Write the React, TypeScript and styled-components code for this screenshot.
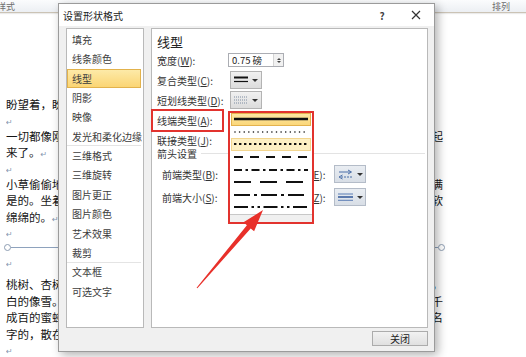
import React from "react";
import styled, { createGlobalStyle } from "styled-components";

const GlobalStyle = createGlobalStyle`
  html, body {
    margin: 0;
    padding: 0;
    background: #fff;
  }
  body {
    font-family: "Noto Sans CJK SC", "Noto Sans", sans-serif;
  }
`;

const Screen = styled.div`
  position: relative;
  width: 526px;
  height: 357px;
  overflow: hidden;
  background: #fff;
`;

/* ---------- word ribbon + document behind the dialog ---------- */

const Ribbon = styled.div`
  height: 12px;
  display: flex;
  align-items: center;
  justify-content: space-between;
  padding: 0 16px 0 0;
  background: linear-gradient(#fbfcfd, #eceff3);
  border-bottom: 1px solid #cbc3b5;
  box-shadow: 0 1px 1px rgba(0, 0, 0, 0.08);
  font-size: 9px;
  color: #6d6d6d;
`;

const RibbonLabel = styled.span<{ $shift?: number }>`
  margin-left: ${(p) => p.$shift ?? 0}px;
`;

const Document = styled.div`
  width: 437px;
  padding: 83px 0 0 6px;
  font-size: 11.5px;
  line-height: 16.5px;
  color: #151515;
`;

const Para = styled.p<{ $gap?: number }>`
  margin: ${(p) => p.$gap ?? 0}px 0 0;
  height: auto;
`;

const EmptyPara = styled.p`
  margin: 0;
  height: 15px;
  line-height: 15px;
  overflow: hidden;
`;

const Mark = styled.span`
  font-family: "DejaVu Sans", sans-serif;
  font-size: 8px;
  line-height: 0;
  color: #8596b0;
`;

const ShapeLine = styled.div`
  display: flex;
  align-items: center;
  width: 441px;
  height: 15px;
  margin-left: -2px;
`;

const Handle = styled.span`
  flex: none;
  width: 5px;
  height: 5px;
  border-radius: 50%;
  border: 1px solid #8d9db2;
  background: #fff;
`;

const Stroke = styled.span`
  flex: 1;
  height: 1px;
  background: #8ea2bd;
`;

/* ---------- dialog ---------- */

const Dialog = styled.div`
  position: absolute;
  left: 58px;
  top: 3px;
  width: 377px;
  height: 349px;
  box-sizing: border-box;
  display: flex;
  flex-direction: column;
  background: #f0f0f0;
  border: 1px solid #9b9b9b;
  box-shadow: 3px 3px 9px rgba(0, 0, 0, 0.3);
  font-size: 10px;
  color: #333;
`;

const TitleBar = styled.div`
  flex: none;
  height: 22px;
  display: flex;
  align-items: center;
  padding: 0 3px 0 4px;
  background: #fff;
`;

const Title = styled.div`
  flex: 1;
  font-size: 10px;
  color: #222;
`;

const TitleButton = styled.div<{ $w: number }>`
  width: ${(p) => p.$w}px;
  height: 18px;
  display: flex;
  align-items: center;
  justify-content: center;
  font-size: 10px;
  font-weight: bold;
  color: #444;
`;

const Body = styled.div`
  flex: 1;
  display: flex;
  gap: 7px;
  padding: 2px 6px 0 7px;
  min-height: 0;
`;

const Nav = styled.ul`
  width: 78px;
  box-sizing: border-box;
  margin: 0;
  padding: 1px 2px 0 0;
  list-style: none;
  background: #fff;
  border: 1px solid #b9b9b9;
`;

const NavItem = styled.li<{ $active?: boolean; $divider?: boolean }>`
  height: 19.4px;
  box-sizing: border-box;
  display: flex;
  align-items: center;
  padding-left: ${(p) => (p.$active ? 4 : 5)}px;
  font-size: 10px;
  color: #3d3d3d;
  white-space: nowrap;
  border-bottom: 1px solid ${(p) => (p.$divider ? "#e4e4e4" : "transparent")};
  ${(p) =>
    p.$active &&
    `
    background: linear-gradient(#fdeaa8, #fbd574);
    border: 1px solid #e2b24c;
  `}
`;

const Pane = styled.div`
  flex: 1;
  box-sizing: border-box;
  padding: 5px 2px 0 5px;
  background: #fff;
  border: 1px solid #b9b9b9;
`;

const PaneHeading = styled.div`
  height: 16px;
  font-size: 13px;
  line-height: 16px;
  color: #222;
`;

const FieldRow = styled.div<{ $h?: number }>`
  display: flex;
  align-items: center;
  height: ${(p) => p.$h ?? 20}px;
`;

const FieldLabel = styled.span<{ $w: number }>`
  flex: none;
  width: ${(p) => p.$w}px;
  white-space: nowrap;
  color: #333;
`;

const SectionHeader = styled.div`
  display: flex;
  align-items: center;
  gap: 4px;
  height: 14px;
  margin-top: -4px;
  &::after {
    content: "";
    flex: 1;
    height: 1px;
    background: #e3e3e3;
  }
`;

const ArrowBlock = styled.div`
  margin-top: 2.5px;
  padding-left: 5px;
`;

const Spacer = styled.span<{ $w: number }>`
  flex: none;
  width: ${(p) => p.$w}px;
`;

const SpinInput = styled.div`
  width: 56px;
  height: 14px;
  box-sizing: border-box;
  display: flex;
  align-items: center;
  margin-left: -2px;
  padding-left: 3px;
  background: #fff;
  border: 1px solid #abadb3;
  font-size: 9.5px;
  color: #222;
`;

const SpinText = styled.span`
  flex: 1;
  white-space: nowrap;
`;

const Spinner = styled.div`
  width: 9px;
  height: 100%;
  display: flex;
  flex-direction: column;
  align-items: center;
  justify-content: center;
  gap: 1px;
  border-left: 1px solid #d4d4d4;
  background: #f1f1f1;
`;

const Tri = styled.span<{ $up?: boolean }>`
  width: 0;
  height: 0;
  border-left: 2.5px solid transparent;
  border-right: 2.5px solid transparent;
  ${(p) =>
    p.$up ? "border-bottom: 2.5px solid #444;" : "border-top: 2.5px solid #444;"}
`;

const Dropdown = styled.div<{ $blue?: boolean }>`
  flex: none;
  width: 32px;
  height: 18px;
  box-sizing: border-box;
  display: flex;
  align-items: center;
  justify-content: center;
  gap: 4px;
  border: 1px solid ${(p) => (p.$blue ? "#b4bcc8" : "#b3b3b3")};
  background: ${(p) =>
    p.$blue
      ? "linear-gradient(#e9edf2, #d8dee6)"
      : "linear-gradient(#f1f1f1, #dcdcdc)"};
`;

const Caret = styled.span`
  width: 0;
  height: 0;
  border-left: 3px solid transparent;
  border-right: 3px solid transparent;
  border-top: 3px solid #333;
`;

const Footer = styled.div`
  flex: none;
  height: 23px;
  box-sizing: border-box;
  display: flex;
  justify-content: flex-end;
  align-items: flex-start;
  padding: 3px 6px 0 0;
`;

const CloseButton = styled.button`
  width: 56px;
  height: 15px;
  padding: 0;
  border: 1px solid #acacac;
  background: linear-gradient(#f2f2f2, #e0e0e0);
  font-family: inherit;
  font-size: 10px;
  line-height: 13px;
  color: #222;
`;

/* ---------- annotations + open dash list ---------- */

const RedBox = styled.div<{ $l: number; $t: number; $w: number; $h: number }>`
  position: absolute;
  left: ${(p) => p.$l}px;
  top: ${(p) => p.$t}px;
  width: ${(p) => p.$w}px;
  height: ${(p) => p.$h}px;
  box-sizing: border-box;
  border: 2px solid #e2332e;
`;

const DashMenu = styled(RedBox)`
  display: flex;
  flex-direction: column;
  background: #f0f0f0;
`;

const DashList = styled.div`
  background: #fff;
  border-bottom: 1px solid #c8c8c8;
`;

const DashRow = styled.div<{ $tone?: "selected" | "hover" }>`
  height: 12.6px;
  box-sizing: border-box;
  display: flex;
  align-items: center;
  justify-content: center;
  margin: 0 1px;
  border: 1px solid transparent;
  ${(p) =>
    p.$tone === "selected" &&
    "background: linear-gradient(#fde7a2, #fbd77a); border-color: #e3b24e;"}
  ${(p) =>
    p.$tone === "hover" && "background: #fdf0c4; border-color: #f3d68f;"}
`;

const Overlay = styled.svg`
  position: absolute;
  left: 0;
  top: 0;
  pointer-events: none;
`;

/* ---------- small drawings ---------- */

const CloseIcon = () => (
  <svg width="10" height="10" viewBox="0 0 10 10">
    <path d="M1 1 L9 9 M9 1 L1 9" stroke="#333" strokeWidth="1.2" />
  </svg>
);

const CompoundIcon = () => (
  <svg width="14" height="10" viewBox="0 0 14 10">
    <line x1="0" y1="2.5" x2="14" y2="2.5" stroke="#111" strokeWidth="2" />
    <line x1="0" y1="6.5" x2="14" y2="6.5" stroke="#111" strokeWidth="1.2" />
  </svg>
);

const DashTypeIcon = () => (
  <svg width="14" height="10" viewBox="0 0 14 10">
    {[2, 5, 8].map((y) => (
      <line
        key={y}
        x1="0"
        y1={y}
        x2="14"
        y2={y}
        stroke="#7d8ba0"
        strokeWidth="1"
        strokeDasharray="1 1"
      />
    ))}
  </svg>
);

const ArrowTypeIcon = () => (
  <svg width="15" height="11" viewBox="0 0 15 11">
    <line x1="1" y1="3" x2="12" y2="3" stroke="#4a6ea8" strokeWidth="1" />
    <path d="M10 1 L13.5 3 L10 5" fill="none" stroke="#4a6ea8" strokeWidth="1" />
    <line x1="3" y1="8" x2="14" y2="8" stroke="#4a6ea8" strokeWidth="1" strokeDasharray="2 1" />
    <path d="M4.5 6 L1 8 L4.5 10" fill="none" stroke="#4a6ea8" strokeWidth="1" />
  </svg>
);

const ArrowSizeIcon = () => (
  <svg width="15" height="10" viewBox="0 0 15 10">
    <line x1="0" y1="2" x2="15" y2="2" stroke="#5a7cb4" strokeWidth="1" />
    <line x1="0" y1="5" x2="15" y2="5" stroke="#3b5f9e" strokeWidth="1.6" />
    <line x1="0" y1="8.3" x2="15" y2="8.3" stroke="#5a7cb4" strokeWidth="1" />
  </svg>
);

interface DashSampleProps {
  dash?: string;
  width?: number;
  round?: boolean;
}

const DashSample: React.FC<DashSampleProps> = ({ dash, width = 2, round }) => (
  <svg width="74" height="8" viewBox="0 0 74 8">
    <line
      x1={round ? 1 : 0}
      y1="4"
      x2="74"
      y2="4"
      stroke="#111"
      strokeWidth={width}
      strokeDasharray={dash}
      strokeLinecap={round ? "round" : "butt"}
    />
  </svg>
);

const navItems: { label: string; active?: boolean; divider?: boolean }[] = [
  { label: "填充" },
  { label: "线条颜色" },
  { label: "线型", active: true },
  { label: "阴影" },
  { label: "映像" },
  { label: "发光和柔化边缘", divider: true },
  { label: "三维格式" },
  { label: "三维旋转" },
  { label: "图片更正" },
  { label: "图片颜色" },
  { label: "艺术效果" },
  { label: "裁剪", divider: true },
  { label: "文本框" },
  { label: "可选文字" },
];

const dashStyles: (DashSampleProps & { tone?: "selected" | "hover" })[] = [
  { tone: "selected", width: 2.4 },
  { dash: "0.01 4.6", width: 1.6, round: true },
  { tone: "hover", dash: "2.4 2.6", width: 2.2 },
  { dash: "9 7" },
  { dash: "8 3.5 2.5 3.5" },
  { dash: "17 9" },
  { dash: "16 4 3 4" },
  { dash: "14 3.5 2.5 3.5 2.5 3.5" },
];

const Paragraph: React.FC<{ text: string; gap?: number }> = ({ text, gap }) => (
  <Para $gap={gap}>
    {text}
    <Mark>↵</Mark>
  </Para>
);

const Blank = () => (
  <EmptyPara>
    <Mark>↵</Mark>
  </EmptyPara>
);

export default function App() {
  return (
    <Screen>
      <GlobalStyle />
      <Ribbon>
        <RibbonLabel $shift={-3}>样式</RibbonLabel>
        <RibbonLabel>排列</RibbonLabel>
      </Ribbon>

      <Document>
        <Paragraph text="盼望着，盼望着，东风来了，春天的脚步近了。" />
        <Blank />
        <Paragraph text="一切都像刚睡醒的样子，欣欣然张开了眼。山朗润起来了，水涨起来了，太阳的脸红起来了。" />
        <Blank />
        <Paragraph text="小草偷偷地从土里钻出来，嫩嫩的，绿绿的。园子里，田野里，瞧去，一大片一大片满是的。坐着，躺着，打两个滚，踢几脚球，赛几趟跑，捉几回迷藏。风轻悄悄的，草软绵绵的。" />
        <Blank />
        <ShapeLine>
          <Handle />
          <Stroke />
          <Handle />
        </ShapeLine>
        <Blank />
        <Paragraph
          gap={6}
          text="桃树、杏树、梨树，你不让我，我不让你，都开满了花赶趟儿。红的像火，粉的像霞，白的像雪。花里带着甜味儿；闭了眼，树上仿佛已经满是桃儿、杏儿、梨儿。花下成千成百的蜜蜂嗡嗡地闹着，大小的蝴蝶飞来飞去。野花遍地是：杂样儿，有名字的，没名字的，散在草丛里，像眼睛，像星星，还眨呀眨的。"
        />
        <Blank />
      </Document>

      <Dialog>
        <TitleBar>
          <Title>设置形状格式</Title>
          <TitleButton $w={24}>?</TitleButton>
          <Spacer $w={7} />
          <TitleButton $w={30}>
            <CloseIcon />
          </TitleButton>
        </TitleBar>

        <Body>
          <Nav>
            {navItems.map((item) => (
              <NavItem key={item.label} $active={item.active} $divider={item.divider}>
                {item.label}
              </NavItem>
            ))}
          </Nav>

          <Pane>
            <PaneHeading>线型</PaneHeading>
            <FieldRow>
              <FieldLabel $w={73}>
                宽度(<u>W</u>):
              </FieldLabel>
              <SpinInput>
                <SpinText>0.75 磅</SpinText>
                <Spinner>
                  <Tri $up />
                  <Tri />
                </Spinner>
              </SpinInput>
            </FieldRow>
            <FieldRow>
              <FieldLabel $w={73}>
                复合类型(<u>C</u>):
              </FieldLabel>
              <Dropdown>
                <CompoundIcon />
                <Caret />
              </Dropdown>
            </FieldRow>
            <FieldRow>
              <FieldLabel $w={73}>
                短划线类型(<u>D</u>):
              </FieldLabel>
              <Dropdown>
                <DashTypeIcon />
                <Caret />
              </Dropdown>
            </FieldRow>
            <FieldRow>
              <FieldLabel $w={73}>
                线端类型(<u>A</u>):
              </FieldLabel>
              <Dropdown>
                <Caret />
              </Dropdown>
            </FieldRow>
            <FieldRow>
              <FieldLabel $w={73}>
                联接类型(<u>J</u>):
              </FieldLabel>
            </FieldRow>
            <SectionHeader>箭头设置</SectionHeader>
            <ArrowBlock>
              <FieldRow $h={23}>
                <FieldLabel $w={70}>
                  前端类型(<u>B</u>):
                </FieldLabel>
                <Dropdown $blue>
                  <ArrowTypeIcon />
                  <Caret />
                </Dropdown>
                <Spacer $w={6} />
                <FieldLabel $w={64}>
                  后端类型(<u>E</u>):
                </FieldLabel>
                <Dropdown $blue>
                  <ArrowTypeIcon />
                  <Caret />
                </Dropdown>
              </FieldRow>
              <FieldRow $h={23}>
                <FieldLabel $w={70}>
                  前端大小(<u>S</u>):
                </FieldLabel>
                <Dropdown $blue>
                  <ArrowSizeIcon />
                  <Caret />
                </Dropdown>
                <Spacer $w={6} />
                <FieldLabel $w={64}>
                  后端大小(<u>Z</u>):
                </FieldLabel>
                <Dropdown $blue>
                  <ArrowSizeIcon />
                  <Caret />
                </Dropdown>
              </FieldRow>
            </ArrowBlock>
          </Pane>
        </Body>

        <Footer>
          <CloseButton>关闭</CloseButton>
        </Footer>
      </Dialog>

      <RedBox $l={151} $t={109} $w={73} $h={23} />

      <DashMenu $l={228} $t={111} $w={86} $h={113}>
        <DashList>
          {dashStyles.map((s, i) => (
            <DashRow key={i} $tone={s.tone}>
              <DashSample dash={s.dash} width={s.width} round={s.round} />
            </DashRow>
          ))}
        </DashList>
      </DashMenu>

      <Overlay width="526" height="357" viewBox="0 0 526 357">
        <polygon
          points="263,210 254.1,231.3 250.7,228.4 197.4,288.3 196.6,287.7 246.9,225.2 243.5,222.3"
          fill="#e8302a"
        />
      </Overlay>
    </Screen>
  );
}
